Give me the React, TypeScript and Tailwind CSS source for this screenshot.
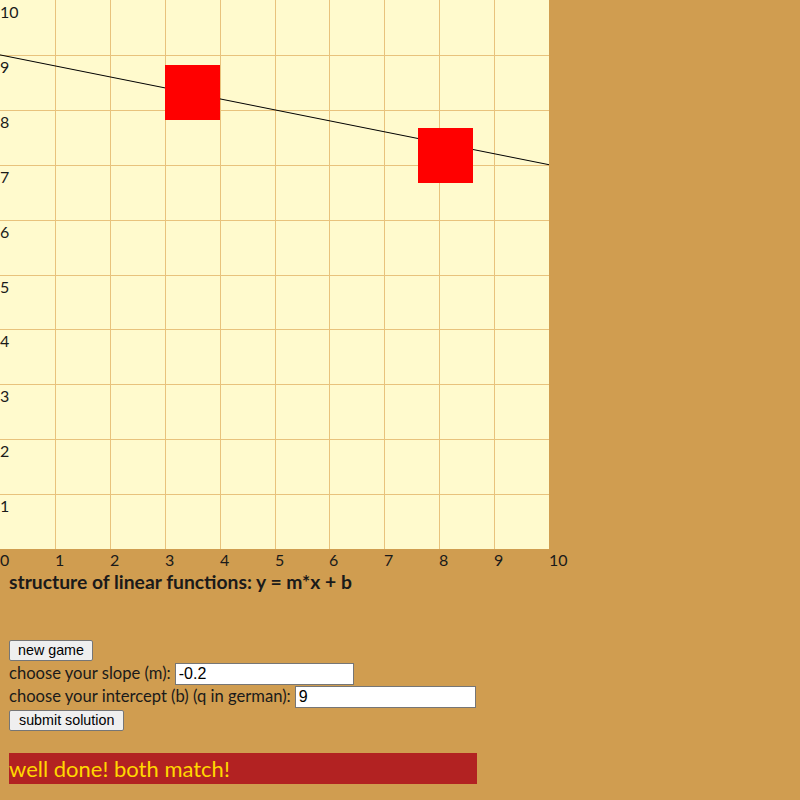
import React from 'react'

const SIZE = 549
const STEP = SIZE / 10
const ticks = [0, 1, 2, 3, 4, 5, 6, 7, 8, 9, 10]

const slope = -0.2
const intercept = 9
const boxes = [
  { x: 165, y: 65 },
  { x: 418, y: 128 },
]

function toPx(v: number) {
  return SIZE - v * STEP
}

function Graph() {
  return (
    <svg width={570} height={572} className="block" style={{ fontFamily: 'Lato, "Open Sans", sans-serif' }}>
      <rect x={0} y={0} width={SIZE} height={SIZE} fill="#fffacd" />
      {ticks.slice(1, 10).map((i) => {
        const p = Math.round(i * STEP) + 0.5
        return (
          <g key={i}>
            <line x1={p} y1={0} x2={p} y2={SIZE} stroke="#e8c27c" strokeWidth={1} />
            <line x1={0} y1={p} x2={SIZE} y2={p} stroke="#e8c27c" strokeWidth={1} />
          </g>
        )
      })}
      <line
        x1={0}
        y1={toPx(intercept)}
        x2={SIZE}
        y2={toPx(intercept + slope * 10)}
        stroke="#000"
        strokeWidth={1}
      />
      {boxes.map((b, i) => (
        <rect key={i} x={b.x} y={b.y} width={55} height={55} fill="#ff0000" />
      ))}
      {ticks.slice(1).map((v) => (
        <text key={'y' + v} x={0} y={Math.round(toPx(v)) + 18} fontSize={16} fill="#1a1a1a">
          {v}
        </text>
      ))}
      {ticks.map((v) => (
        <text key={'x' + v} x={Math.round(v * STEP)} y={566} fontSize={16} fill="#1a1a1a">
          {v}
        </text>
      ))}
    </svg>
  )
}

export default function App() {
  return (
    <div className="min-h-[800px] w-[800px] bg-[#d09d50] text-[#1a1a1a] font-['Lato','Open_Sans',sans-serif]">
      <Graph />
      <div className="px-[9px]">
        <h3 className="text-[19.3px] font-bold leading-[22px] -mt-[1px]">structure of linear functions: y = m*x + b</h3>
        <div className="mt-[47px] flex flex-col items-start text-[16.6px] leading-[23px]">
          <button className="h-[21px] px-[8px] bg-[#efefef] border border-[#767676] rounded-[2px] text-[14.3px] leading-none text-black font-['Liberation_Sans',Arial,sans-serif]">
            new game
          </button>
          <label className="flex items-center gap-[4px] mt-[1px]">
            choose your slope (m):
            <input
              defaultValue="-0.2"
              className="w-[179px] h-[22px] px-[3px] bg-white border border-[#767676] text-[16px] text-black font-['Liberation_Sans',Arial,sans-serif] outline-none"
            />
          </label>
          <label className="flex items-center gap-[4px]">
            choose your intercept (b) (q in german):
            <input
              defaultValue="9"
              className="w-[181px] h-[22px] px-[3px] bg-white border border-[#767676] text-[16px] text-black font-['Liberation_Sans',Arial,sans-serif] outline-none"
            />
          </label>
          <button className="h-[21px] mt-[2px] px-[9px] bg-[#efefef] border border-[#767676] rounded-[2px] text-[14.3px] leading-none text-black font-['Liberation_Sans',Arial,sans-serif]">
            submit solution
          </button>
        </div>
        <div className="mt-[22px] w-[468px] h-[31px] bg-[#b22222] text-[#ffd700] text-[22px] leading-[31px]">
          well done! both match!
        </div>
      </div>
    </div>
  )
}
